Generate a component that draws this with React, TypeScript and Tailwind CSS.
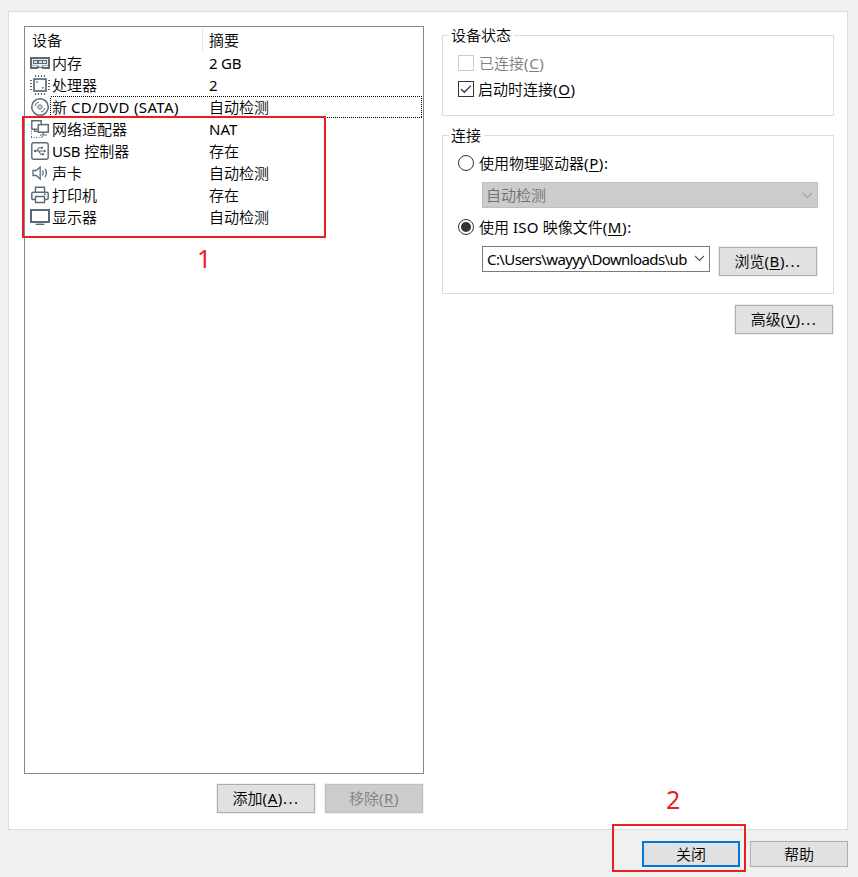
import type { ReactNode } from 'react';

const INK = '#5a6b78';

const MemoryIcon = () => (
  <svg width="20" height="20" viewBox="0 0 20 20" fill="none" shapeRendering="crispEdges">
    <rect x="1" y="5" width="18" height="10" fill="#e9edf0" stroke={INK} strokeWidth="2" />
    <rect x="3" y="7" width="14" height="4" fill={INK} />
    <path d="M4 8h3v2H4zM8.5 8h3v2h-3zM13 8h3v2h-3z" fill="#dfe4e8" />
    <path d="M2 12.5h6M12 12.5h6" stroke="#a9b4bc" />
    <path d="M8 14h4v2H8z" fill="#fff" />
    <path d="M7 13.5h1.5M11.5 13.5H13M8 14.5h4" stroke={INK} />
  </svg>
);

const CpuIcon = () => (
  <svg width="20" height="20" viewBox="0 0 20 20" fill="none">
    <rect x="4" y="4" width="12" height="12" stroke={INK} strokeWidth="1.7" />
    <path
      d="M5.5 0v2M8.5 0v2M11.5 0v2M14.5 0v2M5.5 18v2M8.5 18v2M11.5 18v2M14.5 18v2M0 5.5h2M0 8.5h2M0 11.5h2M0 14.5h2M18 5.5h2M18 8.5h2M18 11.5h2M18 14.5h2"
      stroke={INK}
      strokeWidth="1.2"
    />
    <path d="M6.2 6.2h1.6v1.6H6.2zM12 12h1.6v1.6H12z" fill={INK} />
  </svg>
);

const DiscIcon = () => (
  <svg width="20" height="20" viewBox="0 0 20 20" fill="none" stroke={INK}>
    <circle cx="10" cy="10" r="8.3" strokeWidth="1.5" />
    <circle cx="10" cy="10" r="2.2" strokeWidth="1" />
    <circle cx="10" cy="10" r="0.7" fill={INK} stroke="none" />
    <path d="M5 9A5 5 0 0 1 9 5M15 11A5 5 0 0 1 11 15" strokeWidth="1" />
  </svg>
);

const NetworkIcon = () => (
  <svg width="20" height="20" viewBox="0 0 20 20" fill="none" stroke={INK}>
    <path d="M7.5 10.3H1.8V1.8h9.4V5" strokeWidth="1.4" />
    <rect x="8.3" y="5.6" width="10" height="7.6" strokeWidth="1.5" />
    <path d="M4 12.3h4M13.3 13.5v2.5M10 16h7M4.5 10.5v2" strokeWidth="1.2" />
    <path d="M1.5 12v7M1 18.5h11M12.5 17v2" strokeWidth="1" strokeDasharray="1 1.5" />
  </svg>
);

const UsbIcon = () => (
  <svg width="20" height="20" viewBox="0 0 20 20" fill="none" stroke={INK}>
    <rect x="1.8" y="1.8" width="16.4" height="16.4" rx="2" strokeWidth="1.4" />
    <path d="M4.5 10h10.5M6.5 10l2.5-3.3h2M8.5 10l2.3 3.3h1.5" strokeWidth="1.1" />
    <circle cx="5" cy="10" r="1.2" fill={INK} stroke="none" />
    <path d="M14 8.4l2.4 1.6-2.4 1.6zM11 5.7h2v2h-2zM12 12.2h2v2h-2z" fill={INK} stroke="none" />
  </svg>
);

const SoundIcon = () => (
  <svg width="20" height="20" viewBox="0 0 20 20" fill="none" stroke={INK}>
    <path d="M3 7.5h3.2L10.2 4v12L6.2 12.5H3z" strokeWidth="1.3" />
    <path d="M12.5 7.5q1.4 2.5 0 5M15 5.8q2.8 4.2 0 8.4" strokeWidth="1.3" />
  </svg>
);

const PrinterIcon = () => (
  <svg width="20" height="20" viewBox="0 0 20 20" fill="none" stroke={INK}>
    <path d="M5.5 7V2.2h9V7" strokeWidth="1.5" />
    <path d="M5 14.5H3.2q-1.4 0-1.4-1.4V8.6q0-1.4 1.4-1.4h13.6q1.4 0 1.4 1.4v4.5q0 1.4-1.4 1.4H15" strokeWidth="1.5" />
    <path d="M5.5 11.5h9v6h-9zM14 9.3h1.8" strokeWidth="1.4" />
  </svg>
);

const DisplayIcon = () => (
  <svg width="20" height="20" viewBox="0 0 20 20" fill="none" stroke={INK}>
    <rect x="1" y="3" width="18" height="12" strokeWidth="2" />
    <path d="M5.5 17.3h9" strokeWidth="1.4" />
  </svg>
);

/* Latin run with its own weight and letter spacing */
const L = ({ children, className = 'tracking-[-0.2px]' }: { children: ReactNode; className?: string }) => (
  <span className={`font-normal ${className}`}>{children}</span>
);

/* Access key in brackets, e.g. (O) */
const Key = ({ k, tail = '' }: { k: string; tail?: string }) => (
  <span className="font-normal tracking-[0.6px]">
    (<span className="underline decoration-1 underline-offset-2">{k}</span>)
    {tail && <span className="tracking-[1.5px]">{tail}</span>}
  </span>
);

const rows: { icon: ReactNode; name: ReactNode; summary: ReactNode }[] = [
  { icon: <MemoryIcon />, name: '内存', summary: <L>2 GB</L> },
  { icon: <CpuIcon />, name: '处理器', summary: <L>2</L> },
  { icon: <DiscIcon />, name: <>新 <L className="tracking-[0.35px]">CD/DVD (SATA)</L></>, summary: '自动检测' },
  { icon: <NetworkIcon />, name: '网络适配器', summary: <L className="tracking-[0px]">NAT</L> },
  { icon: <UsbIcon />, name: <><L>USB</L> 控制器</>, summary: '存在' },
  { icon: <SoundIcon />, name: '声卡', summary: '自动检测' },
  { icon: <PrinterIcon />, name: '打印机', summary: '存在' },
  { icon: <DisplayIcon />, name: '显示器', summary: '自动检测' },
];

const SELECTED = 2;

function DeviceList() {
  return (
    <div className="h-[748px] w-[400px] border border-[#828790] bg-white">
      <div className="flex h-[25px] items-start pt-px">
        <div className="h-[24px] w-[178px] border-r border-[#e5e5e5] pl-[7px] leading-[24px]">设备</div>
        <div className="pl-1.5 leading-[24px]">摘要</div>
      </div>
      {rows.map((row, i) => (
        <div key={i} className="flex h-[22px] items-center pl-[5px]">
          {row.icon}
          <div className="relative flex h-[22px] w-[371px] items-center pl-[2px]">
            <div className="w-[157px]">{row.name}</div>
            <div>{row.summary}</div>
            {i === SELECTED && (
              <svg className="absolute left-0 top-0" width="372" height="22" fill="none">
                <rect x="0.5" y="0.5" width="371" height="21" stroke="#000" strokeDasharray="1 1" shapeRendering="crispEdges" />
              </svg>
            )}
          </div>
        </div>
      ))}
    </div>
  );
}

function Button({ children, tall = false, disabled = false, primary = false }: { children: ReactNode; tall?: boolean; disabled?: boolean; primary?: boolean }) {
  const tone = disabled
    ? 'border border-[#bfbfbf] bg-[#cccccc] text-[#838383]'
    : primary
      ? 'border-2 border-[#0078d7] bg-[#e1e1e1]'
      : 'border border-[#adadad] bg-[#e1e1e1]';
  return (
    <button
      disabled={disabled}
      className={`flex w-[98px] shrink-0 items-center justify-center ${tall ? 'h-[29px] pb-[2px] shadow-[0_0_0_1px_#f0f0f0]' : 'h-[26px]'} ${tone}`}
    >
      <span>{children}</span>
    </button>
  );
}

const Chevron = ({ color }: { color: string }) => (
  <svg width="11" height="7" viewBox="0 0 11 7" fill="none" className="shrink-0">
    <path d="M1 1l4.5 4.5L10 1" stroke={color} strokeWidth="1.1" />
  </svg>
);

const Group = ({ title, className, children }: { title: string; className: string; children: ReactNode }) => (
  <section className={`w-[392px] border border-[#dcdcdc] ${className}`}>
    <h2 className="ml-[6px] -mt-[11px] flex h-[20px] w-fit items-center bg-white pl-[2px] pr-[3px] font-[350]">{title}</h2>
    {children}
  </section>
);

const Radio = ({ on = false }: { on?: boolean }) => (
  <span className="flex size-4 shrink-0 items-center justify-center rounded-full border border-[#333333]">
    {on && <span className="size-[10px] rounded-full bg-[#333333]" />}
  </span>
);

export default function App() {
  return (
    <div className="relative h-[877px] w-[858px] overflow-hidden bg-[#f0f0f0] pl-2 pt-[11px] font-['Noto_Sans','Noto_Sans_CJK_SC',sans-serif] text-[15px] leading-[20px] font-[350] whitespace-nowrap text-black">
      <main className="flex h-[819px] w-[840px] gap-[18px] border border-[#dcdcdc] bg-white pl-[15px] pt-[14px]">
        <div className="w-[400px]">
          <DeviceList />
          <div className="mr-px mt-[10px] flex justify-end gap-[10px]">
            <Button tall>添加<Key k="A" tail="..." /></Button>
            <Button tall disabled>移除<Key k="R" /></Button>
          </div>
        </div>

        <div className="w-[392px] pt-[9px]">
          <Group title="设备状态" className="h-[81px]">
            <label className="mt-[7px] flex h-[22px] items-center gap-[5px] pl-[15px] text-[#7e7e7e]">
              <span className="size-4 border border-[#cccccc]" />
              <span>已连接<Key k="C" /></span>
            </label>
            <label className="mt-[4px] flex h-[22px] items-center gap-[4px] pl-[15px]">
              <span className="flex size-4 items-center justify-center border border-[#333333]">
                <svg width="12" height="12" viewBox="0 0 12 12" fill="none">
                  <path d="M1 6l3.3 3.3L11 2.6" stroke="#333333" strokeWidth="1.3" />
                </svg>
              </span>
              <span>启动时连接<Key k="O" /></span>
            </label>
          </Group>

          <Group title="连接" className="mt-[19px] h-[159px]">
            <label className="mt-[7px] flex h-[22px] items-center gap-[5px] pl-[15px]">
              <Radio />
              <span>使用物理驱动器<Key k="P" tail=":" /></span>
            </label>
            <div className="ml-[39px] mt-[8px] flex h-[26px] w-[336px] items-center justify-between border border-[#bfbfbf] bg-[#cccccc] pl-[3px] pr-[4px] text-[#707070]">
              自动检测
              <Chevron color="#a3a3a3" />
            </div>
            <label className="mt-[8px] flex h-[22px] items-center gap-[5px] pl-[15px]">
              <Radio on />
              <span>使用 <L className="tracking-[0.3px]">ISO</L> 映像文件<Key k="M" tail=":" /></span>
            </label>
            <div className="ml-[39px] mt-[8px] flex h-[30px] gap-[9px]">
              <div className="flex h-[26px] w-[228px] items-center justify-between border border-[#7a7a7a] bg-white pb-px pl-1 pr-[4px]">
                <L className="w-[201px] tracking-[-0.6px]">C:\Users\wayyy\Downloads\ub</L>
                <Chevron color="#555555" />
              </div>
              <div className="pt-px">
                <Button tall>浏览<Key k="B" tail="..." /></Button>
              </div>
            </div>
          </Group>

          <div className="mr-px mt-[11px] flex justify-end">
            <Button tall>高级<Key k="V" tail="..." /></Button>
          </div>
        </div>
      </main>

      <footer className="mt-[11px] flex w-[840px] justify-end gap-[10px]">
        <Button primary>关闭</Button>
        <Button>帮助</Button>
      </footer>

      {/* Red annotations laid over the dialog */}
      <div className="absolute left-[22px] top-[116px] h-[122px] w-[304px] border-2 border-[#ed1c24]" />
      <div className="absolute left-[197px] top-[242px] text-[25px] leading-[32px] font-normal text-[#ed1c24]">1</div>
      <div className="absolute left-[612px] top-[824px] h-[48px] w-[134px] border-2 border-[#ed1c24]" />
      <div className="absolute left-[666px] top-[783px] text-[25px] leading-[32px] font-normal text-[#ed1c24]">2</div>
    </div>
  );
}
